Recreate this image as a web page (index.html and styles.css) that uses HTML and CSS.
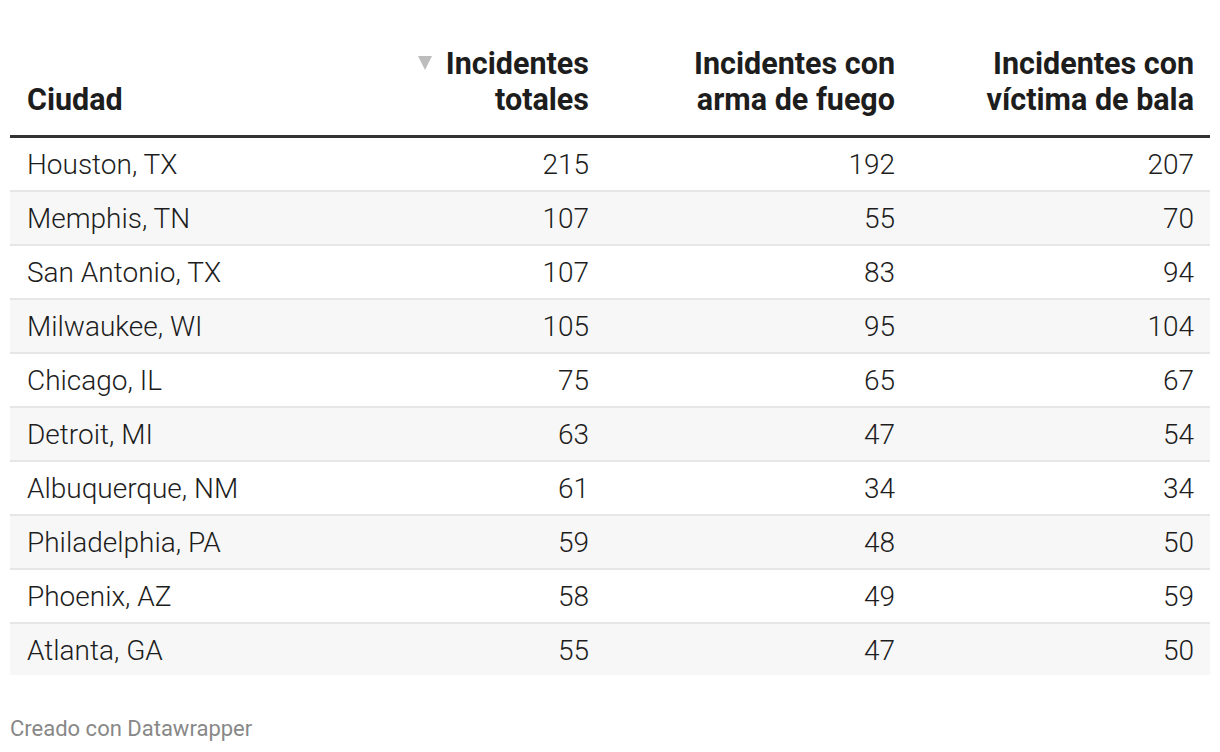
FILE: index.html
```html
<!DOCTYPE html>
<html lang="es">
<head>
<meta charset="utf-8">
<title>Tabla</title>
<link rel="stylesheet" href="styles.css">
</head>
<body>
<div class="wrap">
  <table class="dw-table">
    <colgroup>
      <col class="c1"><col class="c2"><col class="c3"><col class="c4">
    </colgroup>
    <thead>
      <tr>
        <th class="left">Ciudad</th>
        <th class="num"><span class="sort"></span>Incidentes<br>totales</th>
        <th class="num">Incidentes con<br>arma de fuego</th>
        <th class="num">Incidentes con<br>víctima de bala</th>
      </tr>
    </thead>
    <tbody>
      <tr><td class="left">Houston, TX</td><td class="num">215</td><td class="num">192</td><td class="num">207</td></tr>
      <tr><td class="left">Memphis, TN</td><td class="num">107</td><td class="num">55</td><td class="num">70</td></tr>
      <tr><td class="left">San Antonio, TX</td><td class="num">107</td><td class="num">83</td><td class="num">94</td></tr>
      <tr><td class="left">Milwaukee, WI</td><td class="num">105</td><td class="num">95</td><td class="num">104</td></tr>
      <tr><td class="left">Chicago, IL</td><td class="num">75</td><td class="num">65</td><td class="num">67</td></tr>
      <tr><td class="left">Detroit, MI</td><td class="num">63</td><td class="num">47</td><td class="num">54</td></tr>
      <tr><td class="left">Albuquerque, NM</td><td class="num">61</td><td class="num">34</td><td class="num">34</td></tr>
      <tr><td class="left">Philadelphia, PA</td><td class="num">59</td><td class="num">48</td><td class="num">50</td></tr>
      <tr><td class="left">Phoenix, AZ</td><td class="num">58</td><td class="num">49</td><td class="num">59</td></tr>
      <tr><td class="left">Atlanta, GA</td><td class="num">55</td><td class="num">47</td><td class="num">50</td></tr>
    </tbody>
  </table>
  <div class="footer">Creado con Datawrapper</div>
</div>
</body>
</html>
```
FILE: styles.css
```css
* { box-sizing: border-box; }
html, body {
  margin: 0;
  padding: 0;
  background: #fff;
}
body {
  font-family: Roboto, "Liberation Sans", sans-serif;
  color: #1d1d1d;
}
.wrap {
  padding: 46px 10px 0;
}
.dw-table {
  width: 1200px;
  border-collapse: collapse;
  table-layout: fixed;
}
.c1 { width: 295px; }
.c2 { width: 300px; }
.c3 { width: 306px; }
.c4 { width: 299px; }
.dw-table th {
  font-weight: 700;
  font-size: 30.5px;
  line-height: 36px;
  color: #1d1d1d;
  vertical-align: bottom;
  padding: 0 16px 17px 17px;
  border-bottom: 3px solid #333;
}
.dw-table th.left, .dw-table td.left { text-align: left; }
.dw-table th.num, .dw-table td.num { text-align: right; }
.sort {
  display: inline-block;
  width: 0;
  height: 0;
  border-left: 7px solid transparent;
  border-right: 7px solid transparent;
  border-top: 14px solid #bdbdbd;
  margin-right: 14px;
  vertical-align: 4px;
}
.dw-table td {
  font-size: 28px;
  font-weight: 300;
  height: 54px;
  padding: 2px 16px 0 17px;
  vertical-align: middle;
  border-bottom: 2px solid #e6e6e6;
}
.dw-table tbody tr:nth-child(even) td {
  background: #f7f7f7;
}
.dw-table tbody tr:last-child td {
  border-bottom: none;
  height: 52px;
}
.footer {
  margin-top: 42px;
  font-size: 22px;
  line-height: 24px;
  color: #888;
}
```
